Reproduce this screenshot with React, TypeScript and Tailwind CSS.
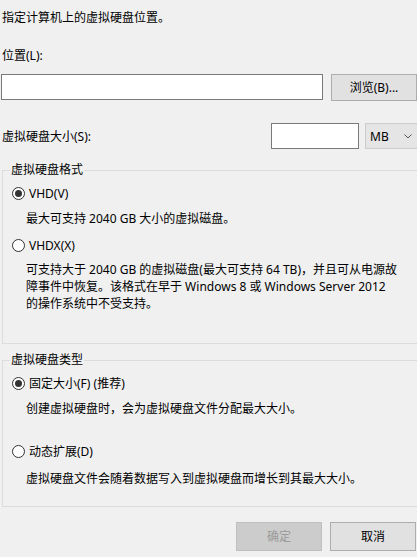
import React from 'react';

const font = { fontFamily: '"Noto Sans", "Noto Sans CJK SC", sans-serif' };

function Radio({ checked, label }: { checked?: boolean; label: string }) {
  return (
    <div className="flex items-center h-[16px] ml-[9px]">
      <span className="w-[13px] h-[13px] rounded-full border border-[#333] bg-white flex items-center justify-center">
        {checked && <span className="w-[7px] h-[7px] rounded-full bg-[#333]" />}
      </span>
      <span className="ml-[4px] pt-[1px]">{label}</span>
    </div>
  );
}

export default function App() {
  return (
    <div
      className="w-[417px] h-[557px] bg-[#f0f0f0] text-[12px] leading-[16px] text-black overflow-hidden flex flex-col"
      style={font}
    >
      <div className="pt-[10px] pl-[2px]">指定计算机上的虚拟硬盘位置。</div>
      <div className="mt-[22px] pl-[2px]">位置(L):</div>

      {/* location */}
      <div className="mt-[10px] flex items-start">
        <div className="ml-[1px] w-[322px] h-[26px] bg-white border border-[#7a7a7a]" />
        <button className="ml-[8px] w-[86px] h-[27px] bg-[#e1e1e1] border border-[#adadad]">浏览(B)...</button>
      </div>

      {/* size */}
      <div className="mt-[22px] flex items-center">
        <div className="flex-1 pl-[2px] pt-[2px]">虚拟硬盘大小(S):</div>
        <div className="w-[88px] h-[26px] bg-white border border-[#7a7a7a]" />
        <div className="ml-[6px] w-[52px] h-[26px] bg-[#e5e5e5] border border-r-0 border-[#cccccc] flex items-center justify-between pl-[4px] pr-[5px]">
          <span className="pt-[1px]">MB</span>
          <svg width="8" height="5" viewBox="0 0 8 5" fill="none" stroke="#555" strokeWidth="1">
            <path d="M0.5 0.5 L4 4 L7.5 0.5" />
          </svg>
        </div>
      </div>

      {/* format */}
      <fieldset className="mt-[13px] ml-[2px] w-[415px] h-[182px] border border-r-0 border-[#dcdcdc]">
        <legend className="ml-[7px] px-[1px]">虚拟硬盘格式</legend>
        <div className="pt-[7px]">
          <Radio checked label="VHD(V)" />
          <div className="mt-[10px] pl-[23px]">最大可支持 2040 GB 大小的虚拟磁盘。</div>
          <div className="mt-[10px]">
            <Radio label="VHDX(X)" />
          </div>
          <div className="mt-[8px] pl-[23px] pr-[10px] leading-[17px]">
            可支持大于 2040 GB 的虚拟磁盘(最大可支持 64 TB)，并且可从电源故
            <br />
            障事件中恢复。该格式在早于 Windows 8 或 Windows Server 2012
            <br />
            的操作系统中不受支持。
          </div>
        </div>
      </fieldset>

      {/* type */}
      <fieldset className="mt-[8px] ml-[2px] w-[415px] h-[155px] border border-r-0 border-[#dcdcdc]">
        <legend className="ml-[7px] px-[1px]">虚拟硬盘类型</legend>
        <div className="pt-[7px]">
          <Radio checked label="固定大小(F) (推荐)" />
          <div className="mt-[10px] pl-[23px]">创建虚拟硬盘时，会为虚拟硬盘文件分配最大大小。</div>
          <div className="mt-[26px]">
            <Radio label="动态扩展(D)" />
          </div>
          <div className="mt-[12px] pl-[23px]">虚拟硬盘文件会随着数据写入到虚拟硬盘而增长到其最大大小。</div>
        </div>
      </fieldset>

      {/* actions */}
      <div className="mt-[15px] flex justify-end">
        <button className="w-[86px] h-[29px] bg-[#cccccc] border border-[#bfbfbf] text-[#9a9a9a]" disabled>
          确定
        </button>
        <button className="ml-[8px] mr-[1px] w-[86px] h-[29px] bg-[#e1e1e1] border border-[#adadad]">取消</button>
      </div>
    </div>
  );
}
